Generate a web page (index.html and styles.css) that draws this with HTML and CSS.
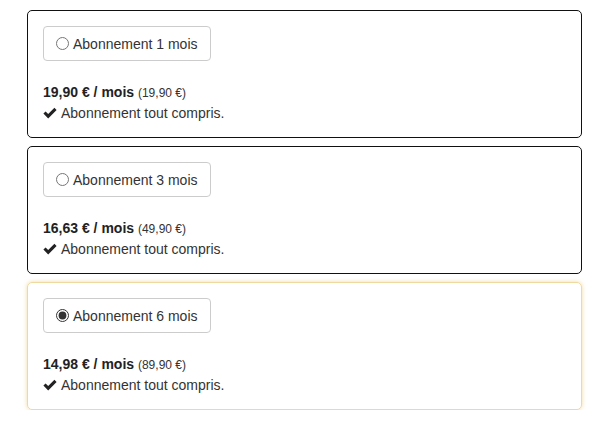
FILE: index.html
```html
<!DOCTYPE html>
<html lang="fr">
<head>
    <meta charset="UTF-8">
    <meta name="viewport" content="width=device-width, initial-scale=1.0">
    <title>Abonnements</title>
    <link rel="stylesheet" href="styles.css">
</head>
<body>
    <div class="offers">
        <div class="offer">
            <label class="offer_btn"><input type="radio" name="offer"> Abonnement 1 mois</label>
            <p class="price"><b>19,90 € / mois</b> <small>(19,90 €)</small></p>
            <p class="perk"><svg class="check" viewBox="0 0 14 12"><path d="M0.4 6.6 L2.6 4.4 L5.2 7 L11.4 0.8 L13.6 3 L5.2 11.4 Z"/></svg> Abonnement tout compris.</p>
        </div>

        <div class="offer">
            <label class="offer_btn"><input type="radio" name="offer"> Abonnement 3 mois</label>
            <p class="price"><b>16,63 € / mois</b> <small>(49,90 €)</small></p>
            <p class="perk"><svg class="check" viewBox="0 0 14 12"><path d="M0.4 6.6 L2.6 4.4 L5.2 7 L11.4 0.8 L13.6 3 L5.2 11.4 Z"/></svg> Abonnement tout compris.</p>
        </div>

        <div class="offer selected">
            <label class="offer_btn"><input type="radio" name="offer" checked> Abonnement 6 mois</label>
            <p class="price"><b>14,98 € / mois</b> <small>(89,90 €)</small></p>
            <p class="perk"><svg class="check" viewBox="0 0 14 12"><path d="M0.4 6.6 L2.6 4.4 L5.2 7 L11.4 0.8 L13.6 3 L5.2 11.4 Z"/></svg> Abonnement tout compris.</p>
        </div>
    </div>
</body>
</html>
```

FILE: styles.css
```css
* {
    margin: 0;
    padding: 0;
    box-sizing: border-box;
}

body {
    font-family: "Liberation Sans", Arial, sans-serif;
    font-size: 14px;
    line-height: 20px;
    color: #333;
    background-color: white;
    padding: 10px 13px 0 27px;
}

.offers {
    display: flex;
    flex-direction: column;
    gap: 8px;
}

.offer {
    border: 1px solid #111;
    border-radius: 5px;
    padding: 15px;
    height: 128px;
}

.offer.selected {
    border-color: #efd9a0;
    box-shadow: 0 0 4px rgba(235, 205, 130, 0.7);
}

.offer_btn {
    display: inline-flex;
    align-items: center;
    height: 35px;
    padding: 0 12px;
    border: 1px solid #ccc;
    border-radius: 4px;
    cursor: pointer;
}

.offer_btn input {
    width: 13px;
    height: 13px;
    margin: 0 4px 0 0;
    accent-color: #333;
}

.price {
    margin-top: 21px;
}

.price b {
    color: #222;
}

.price small {
    font-size: 12px;
}

.perk {
    display: flex;
    align-items: center;
}

.check {
    width: 14px;
    height: 12px;
    fill: #222;
    margin-right: 4px;
}
```
